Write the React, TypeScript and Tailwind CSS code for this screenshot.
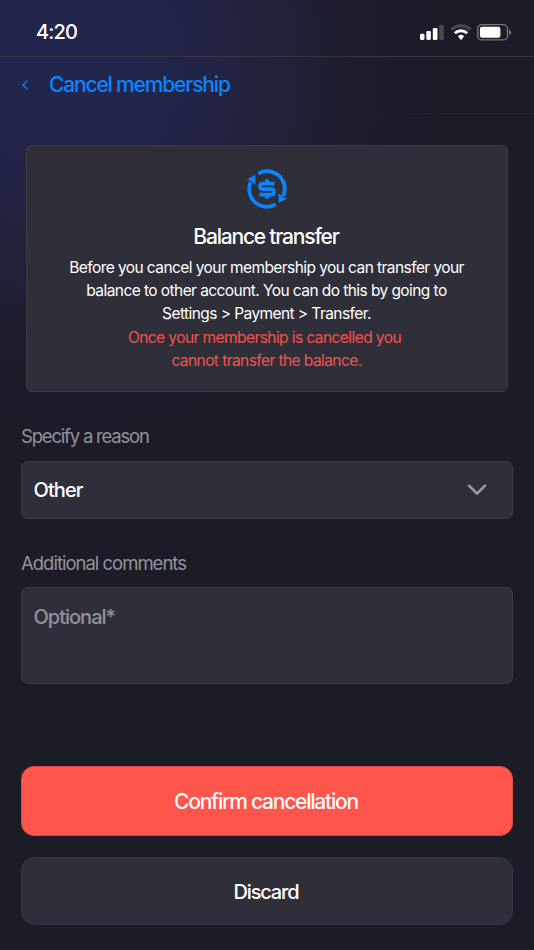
import type { ReactNode } from "react";

function SignalIcon() {
  return (
    <svg width="26" height="18" viewBox="0 0 26 18" className="shrink-0">
      <rect x="1" y="10.7" width="4.5" height="6.2" rx="1.3" fill="#fff" />
      <rect x="7.3" y="7.9" width="4.6" height="9" rx="1.3" fill="#fff" />
      <rect x="13.8" y="5" width="4.7" height="11.9" rx="1.3" fill="#fff" />
      <rect x="20.2" y="1.8" width="4.6" height="15.1" rx="1.3" fill="#494953" />
    </svg>
  );
}

function WifiIcon() {
  return (
    <svg width="22" height="18" viewBox="0 0 22 18" className="shrink-0">
      <path d="M1.5 6.6A13.6 13.6 0 0 1 20.5 6.6" fill="none" stroke="#494953" strokeWidth="3.2" />
      <path d="M4.9 10.3A8.7 8.7 0 0 1 17.1 10.3" fill="none" stroke="#fff" strokeWidth="2.9" />
      <path d="M7.9 13.3A4.5 4.5 0 0 1 14.1 13.3L11.6 16.5Q11 17.1 10.4 16.5Z" fill="#fff" />
    </svg>
  );
}

function BatteryIcon() {
  return (
    <svg width="35" height="18" viewBox="0 0 35 18" className="shrink-0">
      <rect x="0.7" y="1.7" width="29.8" height="15.2" rx="4" fill="none" stroke="#77777e" strokeWidth="1.3" />
      <rect x="2.9" y="3.8" width="20.5" height="11" rx="2.2" fill="#fff" />
      <path d="M32 6.8Q34.2 7.6 34.2 9.4T32 12Z" fill="#77777e" />
    </svg>
  );
}

function TransferIcon() {
  return (
    <svg width="42" height="42" viewBox="0 0 42 42" fill="none" stroke="#0a84ff" strokeWidth="3.7">
      <path d="M12.2 5.6A17.7 17.7 0 0 1 37.3 28" />
      <path d="M29.8 36.4A17.7 17.7 0 0 1 4.7 14" />
      <path d="M1 11.2L9.4 7V17L5.2 13.2Z" fill="#0a84ff" stroke="none" />
      <path d="M41 30.8L32.6 35V25L36.8 28.8Z" fill="#0a84ff" stroke="none" />
      <path d="M28.6 15.6H16.7Q14 15.6 14 18.3T16.7 21.1H25.2Q27.9 21.1 27.9 23.9T25.2 26.7H13.4" strokeWidth="3.7" />
      <path d="M21 11.2V15M21 27V30.7" strokeWidth="3.8" />
    </svg>
  );
}

function Label({ children }: { children: ReactNode }) {
  return <div className="h-7 text-[18.5px] leading-7 text-[#92929b]">{children}</div>;
}

export default function App() {
  return (
    <main className="flex h-[950px] w-[534px] flex-col overflow-hidden bg-[#1c1c27] bg-[radial-gradient(circle_at_75px_65px,#23264d_0,#22254a_100px,#20223b_190px,#1d1d2c_280px,#1c1c27_370px)] font-['Inter','Liberation_Sans',sans-serif] text-white">
      <header className="flex h-[57px] shrink-0 items-end justify-between border-b border-[#36363f] pr-[22px] pb-[9px] pl-[36px]">
        <time className="h-[30px] text-[20px] leading-[30px] font-medium tracking-[-0.8px]">4:20</time>
        <div className="flex h-[24px] items-start gap-[5px]">
          <SignalIcon />
          <WifiIcon />
          <BatteryIcon />
        </div>
      </header>

      <nav className="flex h-[57px] shrink-0 items-center border-b border-[#25252f]/60 pl-[21px] text-[#0a84ff]">
        <svg width="8" height="12" viewBox="0 0 8 12" fill="none" stroke="currentColor" strokeWidth="1.3" className="mb-[1px]">
          <path d="M6.2 1.8L2 6L6.2 10.2" />
        </svg>
        <h1 className="ml-[20px] text-[21px] leading-7 font-medium tracking-[-1.17px] whitespace-nowrap">Cancel membership</h1>
      </nav>

      <section className="mx-[26px] mt-[31px] flex h-[247px] shrink-0 flex-col items-center rounded-[6px] border border-[#3c3c47] bg-[#2f2f3a] pt-[22px] text-center">
        <TransferIcon />
        <h2 className="mt-[13px] pr-[2px] text-[21px] leading-[28px] font-medium tracking-[-1.2px] whitespace-nowrap">Balance transfer</h2>
        <p className="mt-[5px] pr-px text-[15.5px] leading-[23.2px] tracking-[-0.57px] whitespace-nowrap">
          Before you cancel your membership you can transfer your
          <br />
          balance to other account. You can do this by going to
          <br />
          Settings &gt; Payment &gt; Transfer.
          <br />
          <span className="text-[#f6524a]">
            <span className="mr-[4px]">Once your membership is cancelled you</span>
            <br />
            cannot transfer the balance.
          </span>
        </p>
      </section>

      <div className="flex flex-col px-[21px] pt-[30px]">
        <div className="tracking-[-1.2px]">
          <Label>Specify a reason</Label>
        </div>
        <button className="mt-[11px] flex h-[58px] items-center justify-between rounded-[7px] border border-[#3c3c47] bg-[#2f2f3a] pr-[25px] pl-[11.5px] text-left">
          <span className="text-[20px] leading-7 font-medium tracking-[-0.9px]">Other</span>
          <svg width="20" height="14" viewBox="0 0 20 14" fill="none" stroke="#9a9aa4" strokeWidth="2.7" strokeLinecap="round" strokeLinejoin="round">
            <path d="M2 2.6L10 10.6L18 2.6" />
          </svg>
        </button>
        <div className="mt-[30px] tracking-[-1px]">
          <Label>Additional comments</Label>
        </div>
        <div className="mt-[10px] h-[97px] rounded-[7px] border border-[#3c3c47] bg-[#2f2f3a] px-[11.5px] pt-[15px] text-[20px] leading-7 font-medium tracking-[-1px] text-[#92929b]">
          Optional*
        </div>
        <button className="mt-[82px] h-[70px] rounded-[13px] border border-[#d74d48] bg-[#ff554b] pt-[2px] pr-[2px] text-[21px] leading-7 font-medium tracking-[-1.22px]">
          Confirm cancellation
        </button>
        <button className="mt-[21px] h-[68px] rounded-[13px] border border-[#353541] bg-[#2f2f3a] pt-[2px] pr-[2px] text-[20px] leading-7 font-medium tracking-[-1.15px]">
          Discard
        </button>
      </div>
    </main>
  );
}
